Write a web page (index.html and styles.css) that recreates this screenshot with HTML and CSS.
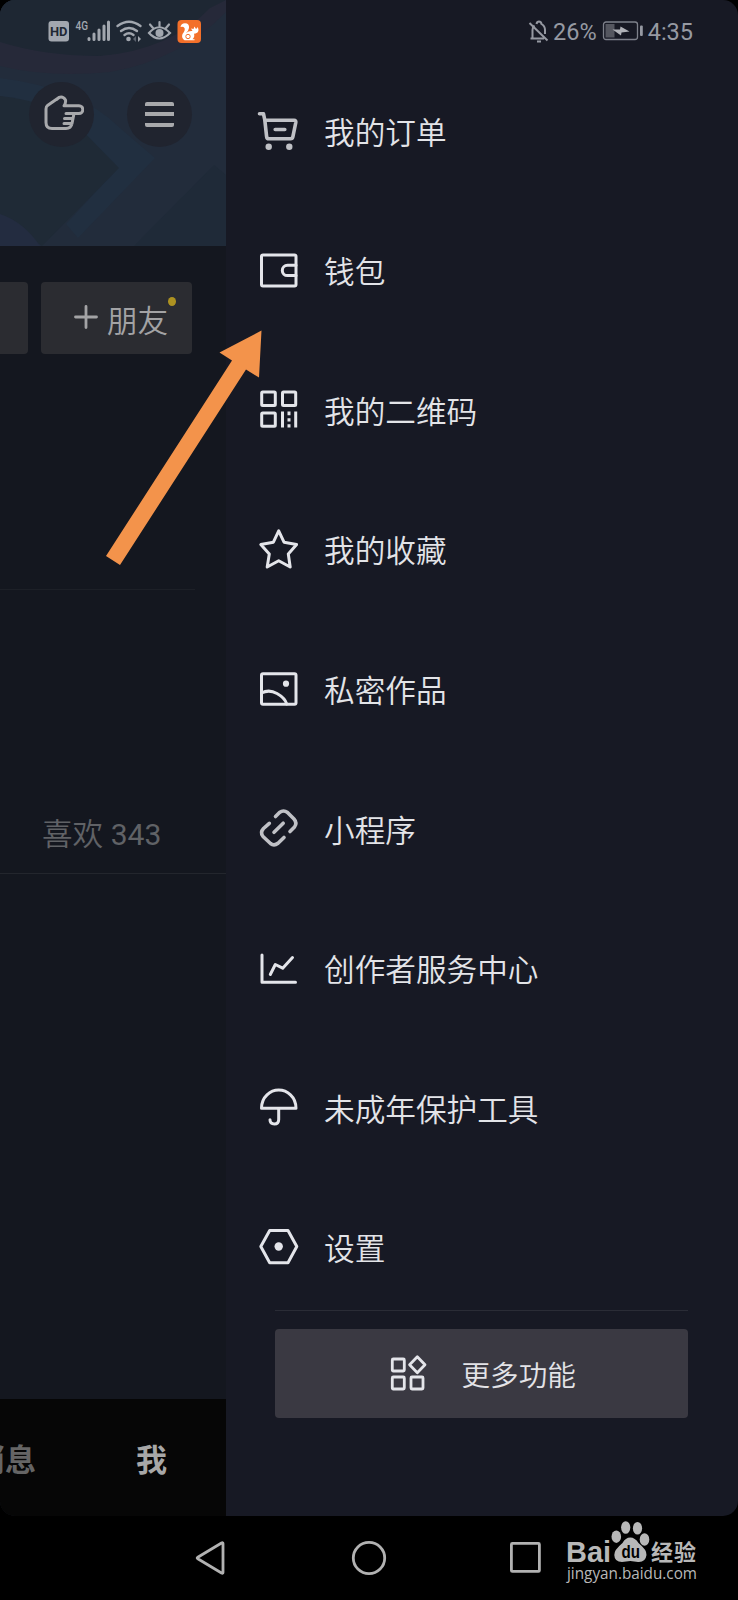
FILE: index.html
```html
<!DOCTYPE html>
<html lang="zh-CN">
<head>
<meta charset="utf-8">
<title>我的</title>
<link rel="stylesheet" href="styles.css">
</head>
<body>
<div class="phone">
  <div class="screen">
    <main class="profile">
      <div class="cover">
        <svg class="cover-art" viewBox="0 0 226 246" width="226" height="246">
          <rect width="226" height="246" fill="#222c3b"/>
          <path d="M0 0H226L210 10Q170 52 100 56Q40 56 0 42Z" fill="#1e2733"/>
          <path d="M0 42Q45 56 100 56Q170 50 210 8L226 0V12Q180 60 110 72Q50 78 0 66Z" fill="#262939"/>
          <path d="M0 78Q80 88 120 128L155 158L78 238L66 224L118 168L60 115L0 96Z" fill="#212f40"/>
          <path d="M0 96Q40 100 70 118L119 168L42 246L0 214Z" fill="#1f2a36"/>
          <path d="M0 214Q24 222 40 246H0Z" fill="#232c40"/>
          <path d="M134 246L214 165L226 175V246Z" fill="#1f2a38"/>
        </svg>
        <div class="cover-buttons">
          <span class="round">
            <svg viewBox="0 0 42 36" width="42" height="36" class="hand"><path d="M17 2.500L5.500 10.500Q4 11.500 4 14V27.500Q4 33.500 10 33.500H24Q29 33.500 30 28.500L32 18.500H37A3.800 3.800 0 0 0 37 10.800H22Q24 8 23.500 5Q21 1 17 2.500L14.500 4.500M32 18.500H24M31 23.500H22.500M30 28.500H22"/></svg>
          </span>
          <span class="round"><i class="bars"></i></span>
        </div>
      </div>
      <div class="actions">
        <span class="action cut"></span>
        <span class="action friend">
          <svg viewBox="0 0 24 24" width="24" height="24" class="plus"><path d="M12 1.500V22.500M1.500 12H22.500"/></svg>
          <span class="friend-label">朋友</span><i class="dot"></i>
        </span>
      </div>
      <div class="section"></div>
      <div class="tabs">喜欢 <span class="count">343</span></div>
      <div class="feed"></div>
      <div class="tabbar"><span class="msg">消息</span><span class="me">我</span></div>
    </main>

    <aside class="drawer">
      <ul class="menu">
        <li><svg class="ico dim" viewBox="0 0 40 40"><path d="M.5 2.800H4.500L5.800 9L7.600 25.500Q7.800 27.800 10 27.800H31.500Q33.500 27.800 33.900 25.700L36.800 11.500Q37.100 9.300 35 9.200H6M16.200 18.500H25.800"/><circle class="fill" cx="9.700" cy="35.800" r="3.200"/><circle class="fill" cx="30.300" cy="35.800" r="3.200"/></svg><span>我的订单</span></li>
        <li><svg class="ico" viewBox="0 0 40 40"><rect x="2.500" y="3.900" width="34.500" height="31" rx="1.500"/><path d="M37 14.200H28.500A5.200 5.200 0 0 0 28.500 24.600H37"/></svg><span>钱包</span></li>
        <li><svg class="ico" viewBox="0 0 40 40"><rect x="2.700" y="2" width="13.600" height="13.600" rx="1"/><rect x="23.500" y="2" width="13.200" height="13.600" rx="1"/><rect x="2.700" y="23" width="13.600" height="13.300" rx="1"/><path class="butt" d="M23.500 21.600V37.600M30 21.600V25.300M30 28.300V31.600M30 34.300V37.600M36.700 21.600V37.600"/></svg><span>我的二维码</span></li>
        <li><svg class="ico" viewBox="0 0 40 40"><path d="M19.700 .8L25 12.200L37.600 14.500L29.300 24L31.200 37L19.700 30.800L8.200 37L10.300 24L1.800 14.500L14.400 12.200Z"/></svg><span>我的收藏</span></li>
        <li><svg class="ico" viewBox="0 0 40 40"><rect x="2.500" y="3.700" width="34.500" height="30.500" rx="1.500"/><path d="M2.500 23Q10 19 18 23.500Q26 28 27.700 34"/><circle class="fill" cx="27" cy="13.700" r="3.100"/></svg><span>私密作品</span></li>
        <li><svg class="ico dim" viewBox="0 0 40 40"><path d="M16.500 7.500L20.500 3.500Q24.500 .5 28.500 3.500L35 10Q38.500 14 35.500 18L31 22.500M10.300 14.300L4.500 19.500Q.8 23.500 4 27.500L11.500 34.500Q15 37.300 19 34.300L25 28.500M15 23.300L24.200 14.200"/></svg><span>小程序</span></li>
        <li><svg class="ico" viewBox="0 0 40 40"><path d="M3 6V33.200H36.500M11.300 25.500L16.300 15.500L23.700 19.200L33.500 8.500"/></svg><span>创作者服务中心</span></li>
        <li><svg class="ico" viewBox="0 0 40 40"><path d="M2.500 20.300Q2.500 12 8 6.800Q13 2 19.700 2Q26.500 2 31.500 6.800Q37 12 37 20.300ZM19.700 20.300V31.500Q19.700 36 15.400 36Q11 36 11 31.800"/></svg><span>未成年保护工具</span></li>
        <li><svg class="ico" viewBox="0 0 40 40"><path d="M1.800 18.500L10.700 2.500H29L37.800 18.500L29 34.700H10.700Z"/><circle class="fill" cx="19.700" cy="18.500" r="4.200"/></svg><span>设置</span></li>
      </ul>
      <div class="more">
        <svg class="more-ico" viewBox="0 0 38 38"><rect x="2.300" y="5" width="12" height="12" rx="1"/><rect x="2.300" y="23" width="12" height="12" rx="1"/><rect x="21" y="23" width="12" height="12" rx="1"/><path d="M27.300 2.800L35 10.800L27.300 18.700L19.600 10.800Z"/></svg>
        <span>更多功能</span>
      </div>
    </aside>
  </div>

  <nav class="nav">
    <svg viewBox="0 0 32 36" width="32" height="36"><path d="M28 3.500V32.500Q28 33.800 26.500 33L2.800 18.800Q1.500 18 2.800 17.200L26.500 3Q28 2.200 28 3.500Z"/></svg>
    <svg viewBox="0 0 36 36" width="36" height="36"><circle cx="18" cy="18" r="15.700"/></svg>
    <svg viewBox="0 0 32 32" width="32" height="32"><rect x="1.400" y="1.400" width="28" height="28" rx="1"/></svg>
  </nav>

  <header class="status">
    <svg viewBox="0 0 160 30" width="160" height="30" class="left-icons">
      <rect x="2.500" y="5" width="20.500" height="20.500" rx="3" fill="#a2a7af"/>
      <text x="4" y="20" class="hd" textLength="17.500" lengthAdjust="spacingAndGlyphs">HD</text>
      <text x="29.500" y="13.500" class="g4" textLength="12.500" lengthAdjust="spacingAndGlyphs">4G</text>
      <g stroke="#a2a7af" stroke-width="3" stroke-linecap="round" fill="none">
        <path d="M43 22.500V23.500M48 18V23.500M53 14V23.500M58 10V23.500M62.500 6V23.500"/>
        <path d="M71.500 10Q83 1.500 94.500 10M75 15Q83 9 91 15" stroke-width="2.400"/>
        <path d="M78.500 19Q83 15.500 87.500 19" stroke-width="2.400"/>
        <path d="M103 17Q113 5.500 124 17Q113 28 103 17ZM104 8.500L107 12M113.500 6V10M123 8.500L120 12" stroke-width="2.200"/>
      </g>
      <circle cx="82.500" cy="23" r="2.300" fill="#a2a7af"/><path d="M92 20L95 23L92 26Z" fill="#a2a7af"/><path d="M90 20L87 23L90 26Z" fill="#5b626e"/>
      <circle cx="113.500" cy="17" r="4" fill="#a2a7af"/>
      <rect x="131.500" y="4" width="23.500" height="23" rx="4" fill="#f3702a"/>
      <path d="M134.500 11Q135 7.500 139 7.300Q143.500 7.500 143 12Q142.500 15 140 17Q143 14.500 146.500 15L145 12.500L147.500 13L148.500 10.500L150 13Q151 12.500 151.500 11Q153.500 14 151.500 16.500Q149.500 18 148 17.500Q149 21 146.500 23.300H148.500V24.300H138.500Q135 22 136.500 18Q139.500 14.500 138.500 12Q137 10 134.500 11Z" fill="#fff"/>
      <circle cx="142" cy="20.500" r="2.200" fill="none" stroke="#f3702a"/>
    </svg>
    <div class="status-right">
      <svg viewBox="0 0 22 24" width="22" height="24" fill="none" stroke="#9699a2" stroke-width="2"><path d="M2.500 19.500H16M4.500 19V11Q4.500 8 6.500 6.500M8.500 5Q9 2.500 11 2.500T13.500 5Q17 7 17 11V15M1.500 4L19.500 21.500M9 22.500H13"/></svg>
      <span class="pct">26%</span>
      <svg viewBox="0 0 42 22" width="42" height="22"><rect x="1.500" y="2" width="34" height="17.500" rx="2.500" fill="none" stroke="#7e818b" stroke-width="1.300"/><rect x="3.500" y="4" width="9" height="13.500" fill="#555760"/><path d="M10.500 9.500L18 9.500L18.500 6.500L27.500 11.500L19.500 12.500L19 15.500L10.500 9.500Z" fill="#b0b2b8"/><rect x="38" y="5.500" width="2.800" height="10.500" rx="1" fill="#9699a2"/></svg>
      <span class="time">4:35</span>
    </div>
  </header>

  <svg class="pointer" viewBox="0 0 160 240" width="160" height="240"><path d="M161.500 10.500L119.500 32.500L132 40.500L6 236L20 245L146 49.500L159 57.500Z"/></svg>

  <svg class="watermark" viewBox="0 0 140 66" width="140" height="66">
    <text x="4" y="41.500" class="wm-bai" textLength="45" lengthAdjust="spacingAndGlyphs">Bai</text>
    <ellipse cx="54.300" cy="16.700" rx="4.800" ry="6.200"/><ellipse cx="63.700" cy="7.500" rx="4.600" ry="6.300"/><ellipse cx="75.500" cy="8.300" rx="4.600" ry="6.300"/><ellipse cx="82.500" cy="19.500" rx="4.800" ry="6.200"/>
    <path d="M68.300 17.500Q73 17.500 76.500 23Q85 30 84.500 35Q83.500 42.500 76 42L68.300 41L60 42Q52.500 42 52.300 35Q52 30 60.500 23Q63.500 17.500 68.300 17.500Z"/>
    <text x="59.500" y="38" class="wm-du" textLength="18.500" lengthAdjust="spacingAndGlyphs">du</text>
    <text x="89" y="40" class="wm-cn" textLength="45">经验</text>
    <text x="5" y="58.700" class="wm-url" textLength="130" lengthAdjust="spacingAndGlyphs">jingyan.baidu.com</text>
  </svg>
</div>
</body>
</html>
```
FILE: styles.css
```css
* { box-sizing: border-box; }
body {
  margin: 0;
  background: #000;
  font-family: Roboto, "Noto Sans CJK SC", sans-serif;
}
.phone {
  position: relative;
  width: 738px;
  height: 1600px;
  overflow: hidden;
  background: #000;
}
.screen {
  display: flex;
  height: 1516px;
  border-radius: 15px;
  overflow: hidden;
}

/* Dimmed profile page */
.profile {
  width: 225.500px;
  flex: none;
  display: flex;
  flex-direction: column;
  overflow: hidden;
  background: #14171f;
}
.cover {
  position: relative;
  height: 246px;
  flex: none;
}
.cover-art { display: block; }
.cover-buttons {
  position: absolute;
  top: 82px;
  left: 28.500px;
  display: flex;
  gap: 33.500px;
}
.round {
  width: 65px;
  height: 65px;
  border-radius: 50%;
  background: #20242f;
  display: flex;
  align-items: center;
  justify-content: center;
}
.hand {
  fill: none;
  stroke: #a8a9ac;
  stroke-width: 3;
  stroke-linecap: round;
  stroke-linejoin: round;
  margin: -3px 0 0 4px;
}
.bars {
  width: 29px;
  height: 25px;
  border-radius: 2px;
  background: linear-gradient(#a8a9ac 0 4px, transparent 4px 10.500px, #a8a9ac 10.500px 14.500px, transparent 14.500px 21px, #a8a9ac 21px);
}
.actions {
  display: flex;
  gap: 13px;
  padding-top: 36px;
}
.action {
  height: 72px;
  background: #2b2c31;
}
.cut {
  width: 28px;
  border-radius: 0 4px 4px 0;
}
.friend {
  position: relative;
  width: 151px;
  border-radius: 4px;
  display: flex;
  align-items: center;
  gap: 9px;
  padding-left: 33px;
  color: #a3a3a5;
  font-size: 30.600px;
  font-weight: 350;
}
.friend-label { margin-top: 1px; }
.plus {
  stroke: #a3a3a5;
  stroke-width: 2.800;
  stroke-linecap: round;
  margin-top: -2px;
}
.dot {
  position: absolute;
  top: 15px;
  right: 16px;
  width: 8px;
  height: 9px;
  border-radius: 50%;
  background: #ad9221;
}
.section {
  width: 195px;
  height: 236px;
  border-bottom: 1px solid #1d2027;
}
.tabs {
  height: 284px;
  padding: 223px 0 0 42px;
  border-bottom: 1px solid #23262d;
  color: #606266;
  font-size: 30.600px;
  line-height: 44px;
  font-weight: 350;
  white-space: nowrap;
}
.count { font-weight: 400; font-size: 30px; }
.feed { flex: 1; }
.tabbar {
  height: 117px;
  background: #060606;
  display: flex;
  align-items: center;
  padding-bottom: 1px;
  font-size: 31px;
  font-weight: 700;
  white-space: nowrap;
}
.msg {
  margin-left: -26px;
  width: 162px;
  color: #656565;
}
.me { color: #a7a7a7; }

/* Side drawer */
.drawer {
  flex: 1;
  background: #171924;
  padding: 101.200px 49px 0 33.500px;
}
.menu {
  list-style: none;
  margin: 0;
  padding: 0;
  display: flex;
  flex-direction: column;
  gap: 79.600px;
}
.menu li {
  height: 60px;
  display: flex;
  align-items: center;
  gap: 25px;
  color: #e3e4e8;
  font-size: 30.650px;
  font-weight: 350;
  white-space: nowrap;
}
.menu span { margin-top: -2px; }
.ico {
  width: 40px;
  height: 40px;
  overflow: visible;
  fill: none;
  stroke: #e4e5ea;
  stroke-width: 3;
  stroke-linecap: round;
  stroke-linejoin: round;
}
.ico .fill { fill: #e4e5ea; stroke: none; }
.ico .butt { stroke-linecap: butt; }
.ico.dim { stroke: #c0c1c6; stroke-width: 3.600; }
.ico.dim .fill { fill: #c0c1c6; }
.more {
  position: relative;
  margin: 51px 0 0 16px;
  height: 89px;
  width: 413px;
  border-radius: 4px;
  background: #3a3942;
  display: flex;
  align-items: center;
  padding-left: 115px;
  gap: 33.500px;
  color: #e3e3e7;
  font-size: 28.600px;
  font-weight: 350;
}
.more::before {
  content: "";
  position: absolute;
  left: 0;
  right: 0;
  top: -19px;
  height: 1px;
  background: #2a2c36;
}
.more-ico {
  width: 38px;
  height: 38px;
  fill: none;
  stroke: #e4e5ea;
  stroke-width: 2.800;
  stroke-linejoin: round;
}

/* System navigation */
.nav {
  height: 84px;
  display: flex;
  align-items: center;
  padding-left: 195px;
  gap: 123.500px;
}
.nav svg {
  fill: none;
  stroke: #b2b2b2;
  stroke-width: 2.800;
}

/* Status bar lies over both the cover and the drawer */
.status {
  position: absolute;
  top: 0;
  left: 0;
  width: 738px;
  height: 62px;
  display: flex;
  justify-content: space-between;
  align-items: center;
  padding: 0 45px 0 46px;
}
.left-icons { font-family: Roboto, sans-serif; }
.hd { font-size: 13.500px; font-weight: 700; fill: #1f2834; }
.g4 { font-size: 12.500px; font-weight: 500; fill: #a2a7af; }
.status-right {
  display: flex;
  align-items: center;
  color: #9699a2;
  font-size: 23.500px;
}
.pct { margin: 1px 5px 0 3px; }
.time { margin: 1px 0 0 4px; }

.pointer {
  position: absolute;
  left: 100px;
  top: 320px;
  overflow: visible;
  fill: #f3934b;
}
.watermark {
  position: absolute;
  left: 562px;
  top: 1520px;
  overflow: visible;
  fill: #b8b8b8;
}
.wm-bai { font: 700 29px "Liberation Sans", sans-serif; }
.wm-du { font: 700 18px "Liberation Sans", sans-serif; fill: #000; }
.wm-cn { font: 700 22px "Noto Sans CJK SC", sans-serif; }
.wm-url { font: 400 17px "Open Sans", sans-serif; }
```
